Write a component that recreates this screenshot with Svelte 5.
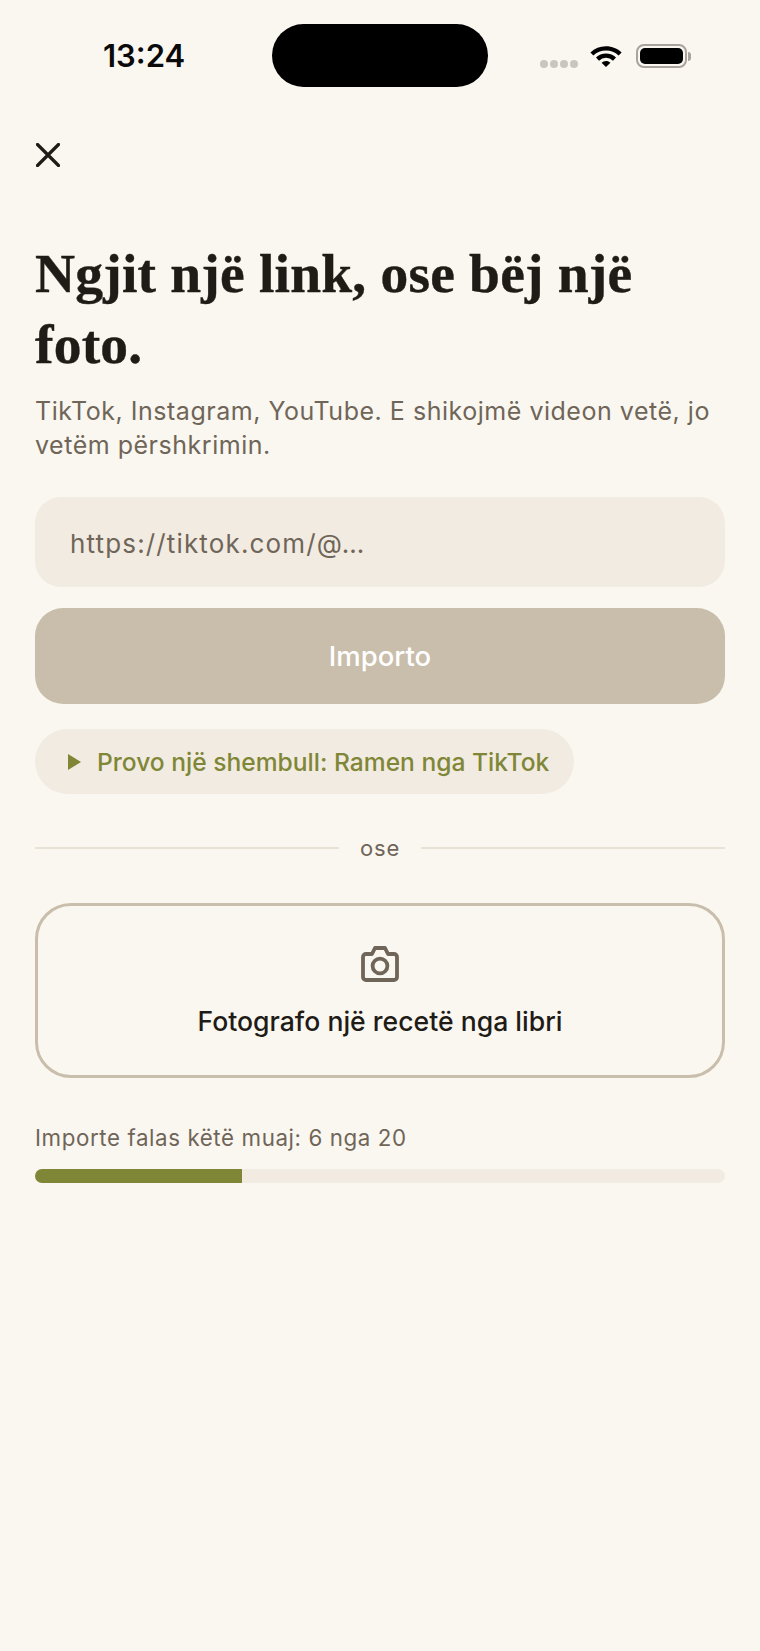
<script>
  const used = 6;
  const total = 20;
</script>

<div class="screen">
  <header class="status">
    <span class="time">13:24</span>
    <div class="island"></div>
    <div class="indicators">
      <div class="dots"><i></i><i></i><i></i><i></i></div>
      <svg class="wifi" viewBox="0 0 34 24" width="34" height="24" aria-hidden="true">
        <path d="M17 3.2c6 0 11.5 2.3 15.6 6.2l-3 3.2A18.4 18.4 0 0 0 17 7.6c-4.800 0-9.300 1.800-12.600 5L1.400 9.400A22.500 22.500 0 0 1 17 3.200z"/>
        <path d="M17 10.600c3.900 0 7.400 1.500 10 4l-3 3.100a10 10 0 0 0-14 0l-3-3.100c2.600-2.500 6.100-4 10-4z"/>
        <path d="M17 18c1.700 0 3.200.6 4.400 1.700L17 24l-4.400-4.300A6.400 6.400 0 0 1 17 18z"/>
      </svg>
      <div class="battery"><div class="cell"></div></div>
      <div class="cap"></div>
    </div>
  </header>

  <main class="content">
    <button class="close" aria-label="Mbyll">
      <svg viewBox="0 0 24 24" width="24" height="24" fill="none" stroke="#1f1b16" stroke-width="3.200" stroke-linecap="round">
        <path d="M1.500 1.500l21 21M22.500 1.500l-21 21"/>
      </svg>
    </button>

    <h1>Ngjit një link, ose bëj një foto.</h1>
    <p class="sub">TikTok, Instagram, YouTube. E shikojmë videon vetë, jo vetëm përshkrimin.</p>

    <div class="input">https://tiktok.com/@…</div>
    <button class="import">Importo</button>

    <button class="sample">
      <svg viewBox="0 0 13 16" width="13" height="16" aria-hidden="true"><path d="M0 0l13 8-13 8z" fill="#7f8737"/></svg>
      <span>Provo një shembull: Ramen nga TikTok</span>
    </button>

    <div class="divider"><span class="line"></span><span class="or">ose</span><span class="line"></span></div>

    <button class="photo">
      <svg viewBox="0 0 38 36" width="38" height="36" fill="none" stroke="#6f6558" stroke-width="3.800" stroke-linejoin="round" aria-hidden="true">
        <path d="M2 11a3 3 0 0 1 3-3h6l3-6h10l3 6h6a3 3 0 0 1 3 3v20a3 3 0 0 1-3 3H5a3 3 0 0 1-3-3z"/>
        <circle cx="19" cy="20" r="7.400"/>
      </svg>
      <span>Fotografo një recetë nga libri</span>
    </button>

    <div class="quota">Importe falas këtë muaj: {used} nga {total}</div>
    <div class="track"><div class="fill" style="width:{(used / total) * 100}%"></div></div>
  </main>
</div>

<style>
  :global(body) {
    margin: 0;
    background: #faf7f1;
  }
  .screen {
    width: 760px;
    height: 1651px;
    background: #faf7f1;
    font-family: Inter, "Liberation Sans", sans-serif;
    overflow: hidden;
  }
  .status {
    position: relative;
    height: 112px;
  }
  .time {
    position: absolute;
    left: 103px;
    top: 38px;
    font-size: 31px;
    line-height: 35px;
    font-weight: 600;
    color: #0a0a0a;
  }
  .island {
    position: absolute;
    left: 272px;
    top: 24px;
    width: 216px;
    height: 63px;
    border-radius: 32px;
    background: #000;
  }
  .indicators {
    position: absolute;
    left: 540px;
    top: 42px;
    display: flex;
    align-items: center;
    height: 28px;
  }
  .dots {
    display: flex;
    gap: 2px;
    margin-top: 15px;
  }
  .dots i {
    width: 8px;
    height: 8px;
    border-radius: 50%;
    background: #c9c6c0;
  }
  .wifi {
    margin-left: 11px;
    margin-top: -3px;
    fill: #000;
  }
  .battery {
    box-sizing: border-box;
    margin-left: 13px;
    width: 51px;
    height: 24px;
    border: 2px solid #a9a49b;
    border-radius: 8px;
    padding: 2px;
  }
  .cell {
    height: 100%;
    border-radius: 5px;
    background: #000;
  }
  .cap {
    width: 3px;
    height: 9px;
    margin-left: 1px;
    border-radius: 0 3px 3px 0;
    background: #a9a49b;
  }
  .content {
    padding: 0 35px;
    display: flex;
    flex-direction: column;
  }
  button {
    font-family: inherit;
    border: 0;
    padding: 0;
    background: none;
  }
  .close {
    width: 24px;
    height: 24px;
    margin: 31px 0 0 1px;
    display: block;
  }
  .close svg { display: block; }
  h1 {
    margin: 71px 0 0;
    font-family: "Liberation Serif", serif;
    font-weight: 700;
    font-size: 55.500px;
    line-height: 71px;
    letter-spacing: 0.2px;
    -webkit-text-stroke: 0.4px #1f1b16;
    color: #1f1b16;
  }
  .sub {
    margin: 14px 0 0;
    font-size: 25px;
    line-height: 34px;
    letter-spacing: 0.52px;
    color: #6f6558;
  }
  .input {
    margin-top: 35px;
    height: 90px;
    box-sizing: border-box;
    padding: 3px 35px 0;
    display: flex;
    align-items: center;
    border-radius: 26px;
    background: #f2ebe1;
    font-size: 26px;
    letter-spacing: 1.15px;
    color: #6f6558;
  }
  .import {
    margin-top: 21px;
    height: 96px;
    border-radius: 28px;
    background: #c9beab;
    color: #fff;
    font-size: 27.500px;
    font-weight: 500;
  }
  .sample {
    margin-top: 25px;
    align-self: flex-start;
    height: 65px;
    width: 539px;
    box-sizing: border-box;
    padding-left: 33px;
    display: flex;
    align-items: center;
    gap: 16px;
    border-radius: 33px;
    background: #f2ebe1;
    color: #7f8737;
    font-size: 24.600px;
    font-weight: 500;
  }
  .divider {
    margin-top: 44px;
    display: flex;
    align-items: center;
    gap: 21px;
    height: 20px;
  }
  .line {
    flex: 1;
    height: 2px;
    background: #e9e2d6;
  }
  .or {
    font-size: 22px;
    letter-spacing: 0.8px;
    color: #6f6558;
  }
  .photo {
    box-sizing: border-box;
    margin-top: 45px;
    height: 175px;
    border: 3px solid #c9beab;
    border-radius: 36px;
    display: flex;
    flex-direction: column;
    align-items: center;
    padding-top: 40px;
    color: #1f1b16;
    font-size: 26.600px;
    font-weight: 500;
  }
  .photo span { margin-top: 23px; line-height: 32px; }
  .quota {
    margin-top: 46px;
    font-size: 22.300px;
    line-height: 28px;
    letter-spacing: 0.6px;
    color: #6f6558;
  }
  .track {
    margin-top: 17px;
    height: 14px;
    border-radius: 7px;
    background: #f2ebe1;
    overflow: hidden;
  }
  .fill {
    height: 100%;
    background: #7f8737;
  }
</style>
